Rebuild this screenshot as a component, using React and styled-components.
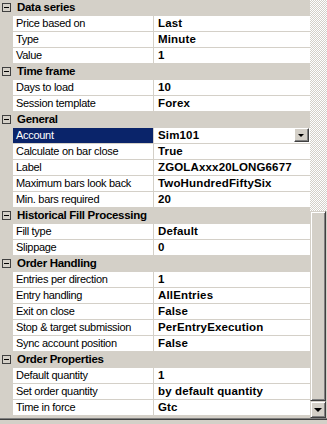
import React from 'react'
import styled, { createGlobalStyle } from 'styled-components'

const GlobalStyle = createGlobalStyle`
    html, body {
        margin: 0;
        padding: 0;
        background: #d4d0c8;
    }
    body {
        width: 327px;
        height: 424px;
        overflow: hidden;
        font-family: "Liberation Sans", Arial, sans-serif;
    }
`

const Window = styled.div`
    width: 327px;
    height: 424px;
    display: flex;
    flex-direction: column;
    background: #d4d0c8;
`

const Main = styled.div`
    height: 418px;
    display: flex;
`

const Grid = styled.div`
    width: 310px;
    display: flex;
    flex-direction: column;
    background: #d4d0c8;
`

const Header = styled.div`
    height: 16px;
    display: flex;
    align-items: center;
    background: #d4d0c8;
    color: #000;
    font-weight: bold;
    font-size: 11.5px;
    letter-spacing: -0.3px;
    line-height: 15px;
    padding-bottom: 1px;
    box-sizing: border-box;
`

const Toggle = styled.span`
    width: 9px;
    height: 9px;
    box-sizing: border-box;
    border: 1px solid #404040;
    margin: 0 6px 0 2px;
    position: relative;

    &::after {
        content: '';
        position: absolute;
        left: 1px;
        right: 1px;
        top: 3px;
        height: 1px;
        background: #000;
    }
`

const Row = styled.div`
    height: 16px;
    display: grid;
    grid-template-columns: 13px 140px 1fr;
    padding-bottom: 1px;
    box-sizing: border-box;
    background: #d4d0c8;
    font-size: 11px;
    line-height: 15px;
`

const Label = styled.div`
    background: ${({ selected }) => (selected ? '#0a246a' : '#fff')};
    color: ${({ selected }) => (selected ? '#fff' : '#000')};
    padding-left: 3px;
    letter-spacing: -0.3px;
    white-space: nowrap;
    overflow: hidden;
`

const Value = styled.div`
    margin-left: 1px;
    background: #fff;
    padding-left: 4px;
    font-weight: bold;
    font-size: 11.5px;
    letter-spacing: 0.15px;
    display: flex;
    justify-content: space-between;
    white-space: nowrap;
    overflow: hidden;
`

const ComboButton = styled.div`
    width: 15px;
    height: 14px;
    margin-right: 1px;
    box-sizing: border-box;
    background: #d4d0c8;
    border: 1px solid;
    border-color: #fff #404040 #404040 #fff;
    box-shadow: inset -1px -1px #808080;
    display: flex;
    align-items: center;
    justify-content: center;

    &::after {
        content: '';
        border-left: 3px solid transparent;
        border-right: 3px solid transparent;
        border-top: 3px solid #000;
        margin: 1px 1px 0 0;
    }
`

const Scrollbar = styled.div`
    width: 17px;
    display: flex;
    flex-direction: column;
`

const Track = styled.div`
    height: 211px;
    background: repeating-conic-gradient(#d4d0c8 0 25%, #fff 0 50%) 0 0 / 2px 2px;
`

const ScrollButton = styled.div`
    flex: ${({ grow }) => (grow ? 1 : 'none')};
    height: ${({ grow }) => (grow ? 'auto' : '17px')};
    width: 16px;
    box-sizing: border-box;
    background: #d4d0c8;
    border: 1px solid;
    border-color: #d4d0c8 #404040 #404040 #d4d0c8;
    box-shadow: inset 1px 1px #fff, inset -1px -1px #808080;
    display: flex;
    align-items: center;
    justify-content: center;
`

const Arrow = styled.span`
    border-left: 4px solid transparent;
    border-right: 4px solid transparent;
    border-top: 4px solid #000;
    margin-top: 1px;
`

const Footer = styled.div`
    flex: 1;
    border-top: 1px solid #808080;
    box-shadow: inset 0 1px #404040;
`

const sections = [
    { title: 'Data series', rows: [['Price based on', 'Last'], ['Type', 'Minute'], ['Value', '1']] },
    { title: 'Time frame', rows: [['Days to load', '10'], ['Session template', 'Forex']] },
    {
        title: 'General',
        rows: [
            ['Account', 'Sim101', true],
            ['Calculate on bar close', 'True'],
            ['Label', 'ZGOLAxxx20LONG6677'],
            ['Maximum bars look back', 'TwoHundredFiftySix'],
            ['Min. bars required', '20'],
        ],
    },
    { title: 'Historical Fill Processing', rows: [['Fill type', 'Default'], ['Slippage', '0']] },
    {
        title: 'Order Handling',
        rows: [
            ['Entries per direction', '1'],
            ['Entry handling', 'AllEntries'],
            ['Exit on close', 'False'],
            ['Stop & target submission', 'PerEntryExecution'],
            ['Sync account position', 'False'],
        ],
    },
    {
        title: 'Order Properties',
        rows: [
            ['Default quantity', '1'],
            ['Set order quantity', 'by default quantity'],
            ['Time in force', 'Gtc'],
        ],
    },
]

function App() {
    return (
        <Window>
            <GlobalStyle />
            <Main>
                <Grid>
                    {sections.map((section) => (
                        <React.Fragment key={section.title}>
                            <Header>
                                <Toggle />
                                {section.title}
                            </Header>
                            {section.rows.map(([label, value, selected]) => (
                                <Row key={label}>
                                    <span />
                                    <Label selected={selected}>{label}</Label>
                                    <Value>
                                        {value}
                                        {selected ? <ComboButton /> : null}
                                    </Value>
                                </Row>
                            ))}
                        </React.Fragment>
                    ))}
                </Grid>
                <Scrollbar>
                    <Track />
                    <ScrollButton grow />
                    <ScrollButton>
                        <Arrow />
                    </ScrollButton>
                </Scrollbar>
            </Main>
            <Footer />
        </Window>
    )
}

export default App
